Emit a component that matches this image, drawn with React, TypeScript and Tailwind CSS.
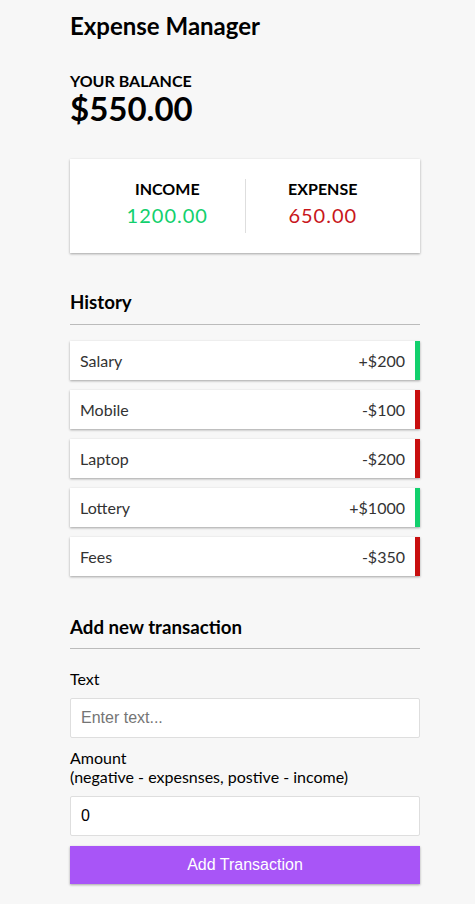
import React from "react";

const shadow = "shadow-[0_1px_3px_rgba(0,0,0,0.12),0_1px_2px_rgba(0,0,0,0.24)]";

const items = [
  { text: "Salary", amount: "+$200", plus: true },
  { text: "Mobile", amount: "-$100", plus: false },
  { text: "Laptop", amount: "-$200", plus: false },
  { text: "Lottery", amount: "+$1000", plus: true },
  { text: "Fees", amount: "-$350", plus: false },
];

export default function App() {
  return (
    <div className="min-h-[904px] bg-[#f7f7f7] font-['Lato','Noto_Sans',sans-serif] text-black">
      <div className="ml-[70px] w-[350px] pt-[12px] pb-[20px]">
        <h2 className="m-0 text-[24px] font-bold leading-[1.2]">Expense Manager</h2>
        <h4 className="mt-[30px] text-[16px] font-bold uppercase leading-[1.2]">Your Balance</h4>
        <h1 className="text-[33px] font-bold leading-[1.15]">$550.00</h1>

        <div className={`mt-[31px] flex bg-white p-[20px] ${shadow}`}>
          <div className="flex-1 border-r border-[#dedede] text-center">
            <h4 className="text-[16px] font-bold uppercase leading-[1.2]">Income</h4>
            <p className="my-[5px] text-[20px] leading-[25px] tracking-[1px] text-[#12d06d]">1200.00</p>
          </div>
          <div className="flex-1 text-center">
            <h4 className="text-[16px] font-bold uppercase leading-[1.2]">Expense</h4>
            <p className="my-[5px] text-[20px] leading-[25px] tracking-[1px] text-[#c8161b]">650.00</p>
          </div>
        </div>

        <h3 className="mt-[38px] border-b border-[#bbb] pb-[10px] text-[18.72px] font-bold leading-[1.2]">History</h3>
        <ul className="mt-[16px] flex flex-col gap-[10px]">
          {items.map((it) => (
            <li
              key={it.text}
              className={`flex justify-between bg-white p-[10px] text-[16px] leading-[19px] text-[#333] ${shadow} border-r-[5px] ${
                it.plus ? "border-[#12d06d]" : "border-[#c80f0f]"
              }`}
            >
              <span>{it.text}</span>
              <span>{it.amount}</span>
            </li>
          ))}
        </ul>

        <h3 className="mt-[40px] border-b border-[#bbb] pb-[10px] text-[18.72px] font-bold leading-[1.2]">Add new transaction</h3>
        <form className="mt-[10px]" onSubmit={(e) => e.preventDefault()}>
          <div>
            <label className="my-[10px] inline-block text-[16px] leading-[19px]">Text</label>
            <input
              type="text"
              placeholder="Enter text..."
              className="block w-full rounded-[2px] border border-[#dedede] bg-white p-[10px] font-['Liberation_Sans',Arial,sans-serif] text-[16px] leading-[18px] placeholder:text-[#757575]"
            />
          </div>
          <div>
            <label className="my-[10px] inline-block text-[16px] leading-[19px]">
              Amount <br />
              (negative - expesnses, postive - income)
            </label>
            <input
              type="number"
              defaultValue={0}
              className="block w-full rounded-[2px] border border-[#dedede] bg-white p-[10px] font-['Liberation_Sans',Arial,sans-serif] text-[16px] leading-[18px]"
            />
          </div>
          <button
            className={`mt-[10px] block w-full bg-[#a855f7] p-[10px] font-['Liberation_Sans',Arial,sans-serif] text-[16px] leading-[18px] text-white ${shadow}`}
          >
            Add Transaction
          </button>
        </form>
      </div>
    </div>
  );
}
